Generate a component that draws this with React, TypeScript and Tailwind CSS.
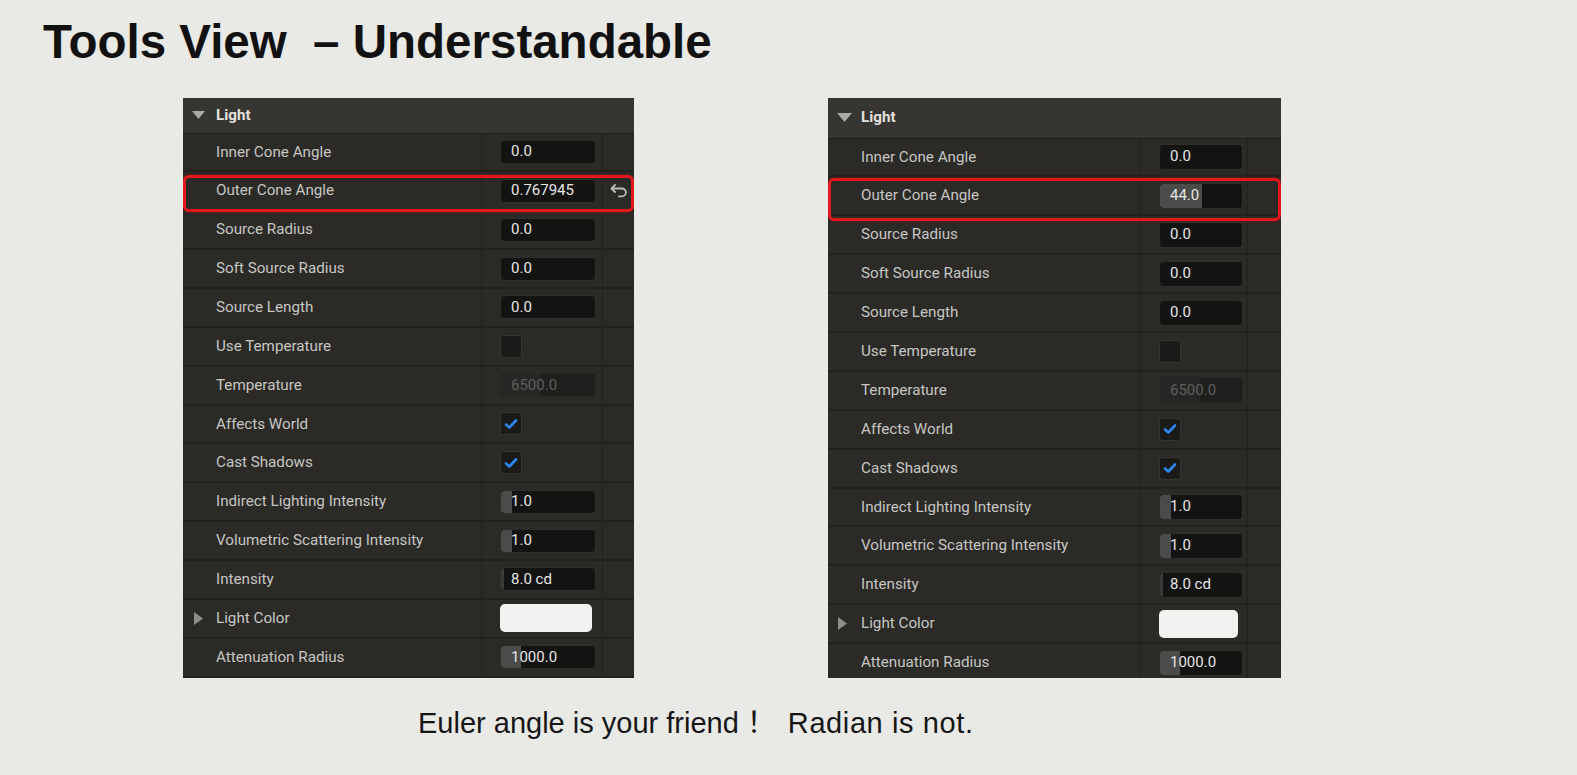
import React from "react";

type Row = {
  label: string;
  kind: "num" | "check" | "disabled" | "color";
  value?: string;
  fill?: number;
  dimFill?: boolean;
  checked?: boolean;
  expand?: boolean;
  reset?: boolean;
  highlight?: boolean;
};

const baseRows = (outer: Row): Row[] => [
  { label: "Inner Cone Angle", kind: "num", value: "0.0" },
  outer,
  { label: "Source Radius", kind: "num", value: "0.0" },
  { label: "Soft Source Radius", kind: "num", value: "0.0" },
  { label: "Source Length", kind: "num", value: "0.0" },
  { label: "Use Temperature", kind: "check", checked: false },
  { label: "Temperature", kind: "disabled", value: "6500.0", fill: 40 },
  { label: "Affects World", kind: "check", checked: true },
  { label: "Cast Shadows", kind: "check", checked: true },
  { label: "Indirect Lighting Intensity", kind: "num", value: "1.0", fill: 11 },
  { label: "Volumetric Scattering Intensity", kind: "num", value: "1.0", fill: 11 },
  { label: "Intensity", kind: "num", value: "8.0 cd", fill: 3, dimFill: true },
  { label: "Light Color", kind: "color", expand: true },
  { label: "Attenuation Radius", kind: "num", value: "1000.0", fill: 20 },
];

const leftRows = baseRows({
  label: "Outer Cone Angle",
  kind: "num",
  value: "0.767945",
  reset: true,
  highlight: true,
});
const rightRows = baseRows({
  label: "Outer Cone Angle",
  kind: "num",
  value: "44.0",
  fill: 42,
  highlight: true,
});

type Cfg = {
  panel: string;
  header: string;
  headTri: string;
  row: string;
  name: string;
  expTri: string;
  value: string;
  input: string;
  swatch: string;
  hl: string;
};

const leftCfg: Cfg = {
  panel: "w-[451px]",
  header: "h-[36px]",
  headTri: "ml-[9px] w-[13px] h-[8px]",
  row: "h-[38.86px]",
  name: "w-[299px]",
  expTri: "ml-[11px]",
  value: "w-[121px]",
  input: "w-[96px] h-[24px]",
  swatch: "w-[92px] h-[28px]",
  hl: "top-[77px] h-[37px]",
};

const rightCfg: Cfg = {
  panel: "w-[453px]",
  header: "h-[41px]",
  headTri: "ml-[9px] w-[15px] h-[9px]",
  row: "h-[38.9px]",
  name: "w-[313px]",
  expTri: "ml-[10px]",
  value: "w-[107px]",
  input: "w-[84px] h-[26px]",
  swatch: "w-[79px] h-[28px]",
  hl: "top-[80px] h-[43px]",
};

function ResetIcon() {
  return (
    <svg width="18" height="14" viewBox="0 0 18 14" fill="none">
      <path d="M5 1 L1.5 4.5 L5 8" stroke="#bdbdbd" strokeWidth="1.8" strokeLinecap="round" strokeLinejoin="round" />
      <path d="M2 4.5 H12 a3.9 3.9 0 0 1 0 7.8 H9" stroke="#bdbdbd" strokeWidth="1.8" strokeLinecap="round" strokeLinejoin="round" />
    </svg>
  );
}

function Value({ row, cfg }: { row: Row; cfg: Cfg }) {
  if (row.kind === "check") {
    return (
      <div className="flex h-[23px] w-[22px] items-center justify-center rounded-[3px] border border-[#353533] bg-[#1a1a18]">
        {row.checked && (
          <svg width="14" height="12" viewBox="0 0 14 12" fill="none">
            <path d="M2 6.5 L5.3 9.5 L12 2.5" stroke="#2f86f0" strokeWidth="2.6" strokeLinecap="round" strokeLinejoin="round" />
          </svg>
        )}
      </div>
    );
  }
  if (row.kind === "color") {
    return <div className={"rounded-[5px] bg-[#f2f2f0] " + cfg.swatch} />;
  }
  const disabled = row.kind === "disabled";
  const fillClass = disabled
    ? "bg-[#262624]"
    : row.dimFill
    ? "bg-[#3a3a38]"
    : "bg-[#4b4b49]";
  return (
    <div
      className={
        "relative flex items-center overflow-hidden rounded-[4px] border " +
        (disabled ? "border-[#272725] bg-[#1e1e1c] " : "border-[#2e2e2c] bg-[#131312] ") +
        cfg.input
      }
    >
      {row.fill ? (
        <div
          className={"absolute left-0 top-0 h-full rounded-l-[3px] " + fillClass}
          style={{ width: row.fill }}
        />
      ) : null}
      <span
        className={
          "relative pl-[10px] text-[15px] leading-none " +
          (disabled ? "text-[#5f5f5d]" : "text-[#e6e6e4]")
        }
      >
        {row.value}
      </span>
    </div>
  );
}

function Panel({ rows, cfg }: { rows: Row[]; cfg: Cfg }) {
  return (
    <div
      className={
        "relative flex h-[580px] shrink-0 flex-col overflow-hidden bg-[#2b2a27] font-['Roboto',sans-serif] " +
        cfg.panel
      }
    >
      <div className={"flex shrink-0 items-center border-b border-[#1f1e1c] bg-[#363531] " + cfg.header}>
        <div className="flex w-[33px] shrink-0 items-center">
          <svg className={cfg.headTri} viewBox="0 0 13 8" preserveAspectRatio="none">
            <polygon points="0,0 13,0 6.5,8" fill="#a9a9a7" />
          </svg>
        </div>
        <span className="text-[15.2px] font-bold text-[#e0e0de]">Light</span>
      </div>
      {rows.map((r, i) => (
        <div key={i} className={"relative flex shrink-0 border-b-2 border-[#222120] " + cfg.row}>
          <div className={"flex items-center border-r border-[#222120] " + cfg.name}>
            <div className="flex w-[33px] shrink-0 items-center">
              {r.expand && (
                <svg className={cfg.expTri} width="9" height="13" viewBox="0 0 9 13">
                  <polygon points="0,0 9,6.5 0,13" fill="#8d8d8b" />
                </svg>
              )}
            </div>
            <span className="text-[15.2px] text-[#c6c6c3]">{r.label}</span>
          </div>
          <div className={"flex items-center border-r border-[#222120] pl-[18px] " + cfg.value}>
            <Value row={r} cfg={cfg} />
          </div>
          <div className="flex flex-1 items-center justify-center">
            {r.reset && <ResetIcon />}
          </div>
        </div>
      ))}
      <div
        className={
          "pointer-events-none absolute left-0 right-0 rounded-[6px] border-[3px] border-[#e3171c] shadow-[0_0_3px_rgba(255,0,0,0.45)] " +
          cfg.hl
        }
      />
    </div>
  );
}

export default function App() {
  return (
    <div className="flex h-[775px] w-[1577px] flex-col overflow-hidden bg-[#e9e9e6]">
      <h1 className="whitespace-pre pl-[43px] pt-[18px] font-['Liberation_Sans',Arial,sans-serif] text-[47.5px] font-bold leading-none text-[#111111]">
        {"Tools View  – Understandable"}
      </h1>
      <div className="mt-[32px] flex gap-[194px] pl-[183px]">
        <Panel rows={leftRows} cfg={leftCfg} />
        <Panel rows={rightRows} cfg={rightCfg} />
      </div>
      <p className="mt-[31px] flex items-baseline whitespace-pre pl-[418px] font-['Liberation_Sans','Noto_Sans_CJK_SC',sans-serif] text-[29px] leading-none text-[#161616]">
        <span>{"Euler angle is your friend ！"}</span>
        <span className="ml-[12px] tracking-[0.6px]">{"Radian is not."}</span>
      </p>
    </div>
  );
}
